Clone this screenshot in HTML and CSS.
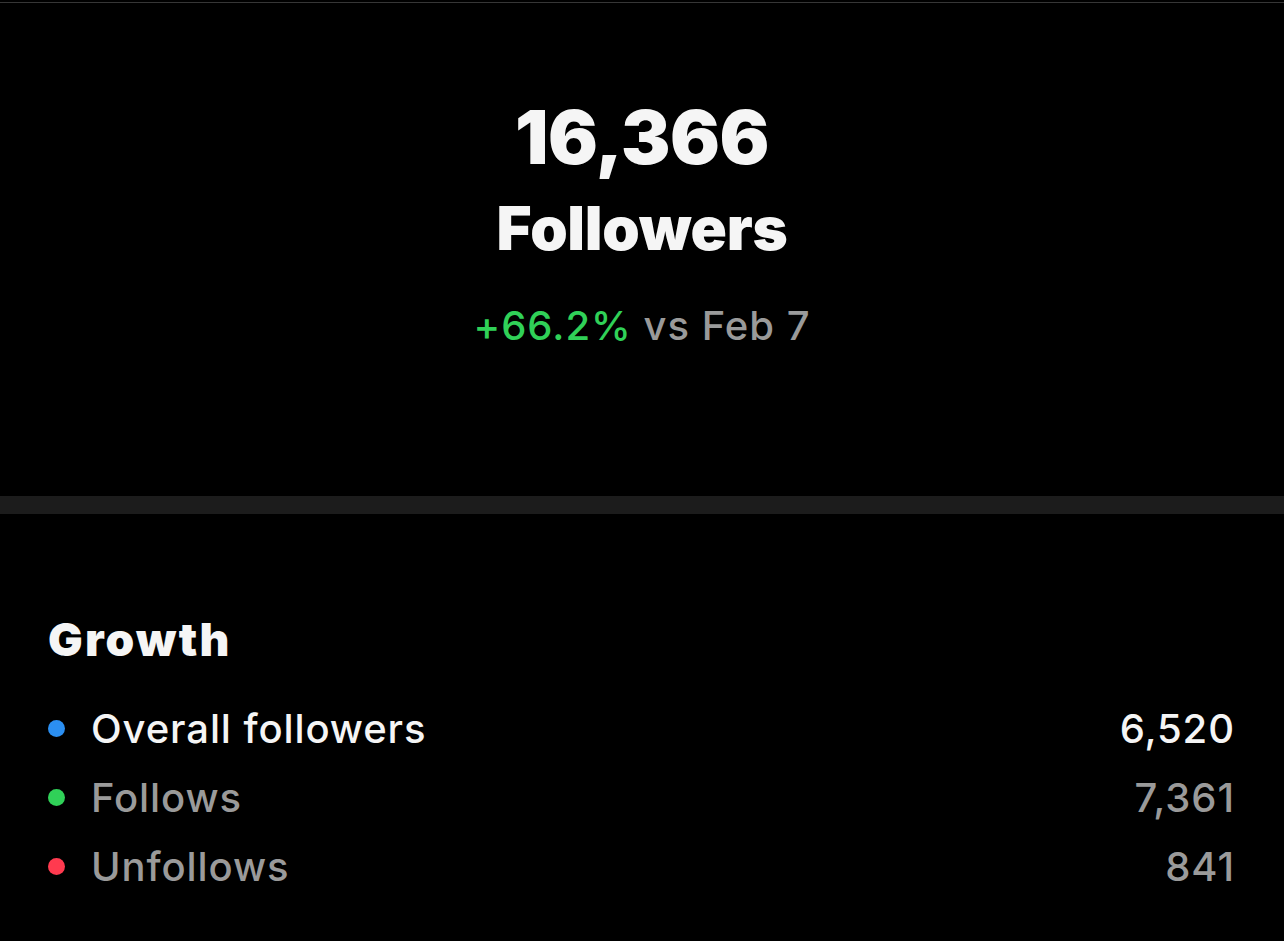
FILE: index.html
```html
<!DOCTYPE html>
<html lang="en">
<head>
<meta charset="utf-8">
<title>Followers</title>
<link rel="stylesheet" href="styles.css">
</head>
<body>
<div class="topline"></div>
<section class="hero">
  <div class="total">16,366</div>
  <div class="label">Followers</div>
  <div class="change"><span class="pos">+66.2%</span> vs Feb 7</div>
</section>
<div class="divider"></div>
<section class="growth">
  <h2 class="title">Growth</h2>
  <ul class="rows">
    <li class="row primary"><span class="dot blue"></span><span class="name">Overall followers</span><span class="value">6,520</span></li>
    <li class="row"><span class="dot green"></span><span class="name">Follows</span><span class="value">7,361</span></li>
    <li class="row"><span class="dot red"></span><span class="name">Unfollows</span><span class="value">841</span></li>
  </ul>
</section>
</body>
</html>
```

FILE: styles.css
```css
* { box-sizing: border-box; }
html, body { margin: 0; padding: 0; background: #000; }
body {
  font-family: Inter, "Noto Sans", "Liberation Sans", sans-serif;
  color: #f5f5f5;
  width: 1284px;
  height: 941px;
  overflow: hidden;
}
.topline {
  margin-top: 2px;
  height: 1px;
  background: #363636;
}
.hero {
  display: flex;
  flex-direction: column;
  align-items: center;
  padding-top: 97px;
  height: 493px;
}
.total {
  font-size: 74px;
  font-weight: 900;
  line-height: 74px;
  letter-spacing: -0.5px;
}
.label {
  margin-top: 24px;
  font-size: 60px;
  font-weight: 900;
  line-height: 60px;
  letter-spacing: -0.3px;
}
.change {
  margin-top: 48px;
  font-size: 40px;
  font-weight: 500;
  line-height: 40px;
  letter-spacing: 1px;
  color: #9a9a9a;
}
.pos { color: #30d158; }
.divider {
  height: 18px;
  background: #1c1c1c;
}
.growth {
  padding: 100px 50px 0 48px;
}
.title {
  margin: 0;
  font-size: 46px;
  font-weight: 900;
  line-height: 50px;
  letter-spacing: 2.2px;
}
.rows {
  list-style: none;
  margin: 44px 0 0;
  padding: 0;
  display: flex;
  flex-direction: column;
  gap: 29px;
}
.row {
  display: flex;
  align-items: center;
  height: 40px;
  font-size: 40px;
  font-weight: 500;
  letter-spacing: 0.9px;
  color: #9a9a9a;
}
.row.primary { color: #f5f5f5; }
.dot {
  width: 17px;
  height: 17px;
  border-radius: 50%;
  margin-right: 26px;
  flex: none;
}
.dot.blue { background: #2b8ff2; }
.dot.green { background: #30d158; }
.dot.red { background: #ff3a4f; }
.name { flex: 1; }
.value { text-align: right; margin-right: -0.9px; }
```
